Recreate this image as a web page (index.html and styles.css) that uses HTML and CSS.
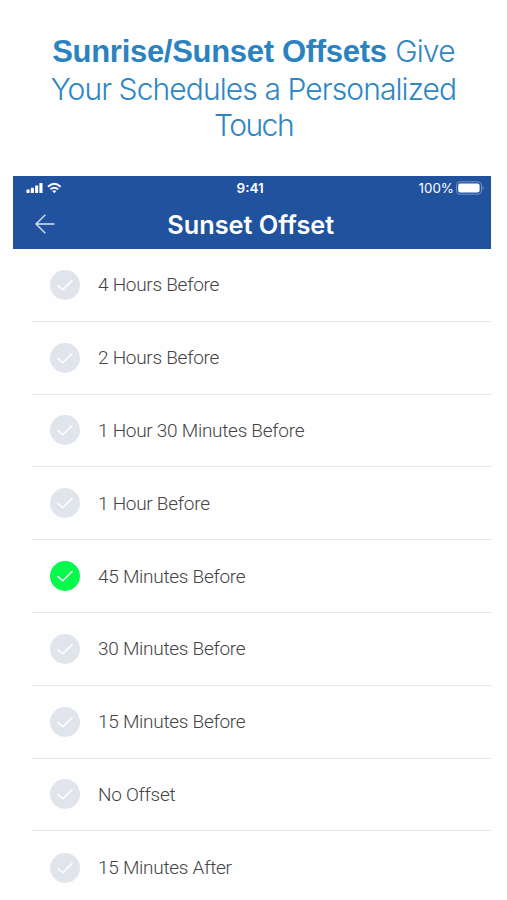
FILE: index.html
```html
<!DOCTYPE html>
<html lang="en">
<head>
    <meta charset="utf-8">
    <title>Sunset Offset</title>
    <link rel="stylesheet" href="styles.css">
</head>
<body>
    <svg class="sprite">
        <symbol id="check" viewBox="0 0 30 30">
            <path d="M8 15.6 L12.8 19.8 L22 10.6" fill="none" stroke="currentColor" stroke-width="1.5" stroke-linecap="round" stroke-linejoin="round"/>
        </symbol>
    </svg>

    <h1 class="headline">
        <span class="line"><b>Sunrise/Sunset Offsets</b> <span class="give">Give</span></span>
        <span class="line line-two">Your Schedules a Personalized</span>
        <span class="line line-three">Touch</span>
    </h1>

    <div class="phone">
        <header class="top">
            <div class="status">
                <div class="signal">
                    <svg width="36" height="12" viewBox="0 0 36 12" fill="#fff">
                        <rect x="0.5" y="7.5" width="3.1" height="3.5" rx="0.6"/>
                        <rect x="4.8" y="5.8" width="3.1" height="5.2" rx="0.6"/>
                        <rect x="9.1" y="3.5" width="3.1" height="7.5" rx="0.6"/>
                        <rect x="13.4" y="1" width="3.1" height="10" rx="0.6"/>
                        <g fill="none" stroke="#fff" stroke-width="1.9">
                            <path d="M22 4.7 Q28.3 -1 34.6 4.7"/>
                            <path d="M24.4 7.4 Q28.3 4 32.2 7.4"/>
                        </g>
                        <path d="M26.2 9 Q28.3 7.3 30.4 9 L28.3 11.2 Z"/>
                    </svg>
                </div>
                <div class="clock">9:41</div>
                <div class="battery">
                    <span class="percent">100%</span>
                    <svg width="29" height="14" viewBox="0 0 29 14">
                        <rect x="0.5" y="0.8" width="25" height="12.4" rx="3.5" fill="none" stroke="#7593c6" stroke-width="1"/>
                        <rect x="2.2" y="2.6" width="21.4" height="8.8" rx="1.8" fill="#fff"/>
                        <path d="M26.7 5 Q29 7 26.7 9 Z" fill="#7593c6"/>
                    </svg>
                </div>
            </div>
            <div class="navbar">
                <svg class="back" width="20" height="20" viewBox="0 0 20 20">
                    <path d="M19.5 10 H1 M10.3 0.8 L1 10 L10.3 19.2" fill="none" stroke="#d5e2f7" stroke-width="1.4"/>
                </svg>
                <h2 class="title">Sunset Offset</h2>
            </div>
        </header>

        <ul class="offsets">
            <li><svg class="tick"><use href="#check"/></svg><span>4 Hours Before</span></li>
            <li><svg class="tick"><use href="#check"/></svg><span>2 Hours Before</span></li>
            <li><svg class="tick"><use href="#check"/></svg><span>1 Hour 30 Minutes Before</span></li>
            <li><svg class="tick"><use href="#check"/></svg><span>1 Hour Before</span></li>
            <li><svg class="tick selected"><use href="#check"/></svg><span>45 Minutes Before</span></li>
            <li><svg class="tick"><use href="#check"/></svg><span>30 Minutes Before</span></li>
            <li><svg class="tick"><use href="#check"/></svg><span>15 Minutes Before</span></li>
            <li><svg class="tick"><use href="#check"/></svg><span>No Offset</span></li>
            <li><svg class="tick"><use href="#check"/></svg><span>15 Minutes After</span></li>
        </ul>
    </div>
</body>
</html>
```
FILE: styles.css
```css
* {
    box-sizing: border-box;
}

body {
    margin: 0;
    height: 900px;
    overflow: hidden;
    background-color: #fefefe;
    font-family: Roboto, "Liberation Sans", sans-serif;
}

.sprite {
    display: none;
}

.headline {
    margin: 0;
    padding-top: 33px;
    height: 176px;
    font-family: Inter, "Liberation Sans", sans-serif;
    font-size: 30px;
    font-weight: 300;
    line-height: 36.5px;
    text-align: center;
    color: #2f86c3;
}

.line {
    display: block;
    white-space: nowrap;
}

.line b {
    font-family: "Liberation Sans", Arial, sans-serif;
    font-weight: bold;
    font-size: 31px;
    letter-spacing: -0.3px;
    color: #2a82c0;
}

.line-two {
    letter-spacing: -0.9px;
}

.line-three {
    letter-spacing: -1.5px;
}

.give {
    letter-spacing: -0.8px;
}

.phone {
    margin-left: 12.5px;
    width: 478.5px;
}

.top {
    height: 73px;
    background-color: #20529e;
    color: #fff;
}

.status {
    display: grid;
    grid-template-columns: 224px auto 1fr;
    align-items: center;
    height: 23px;
    padding: 0 6px 0 0;
    font-family: Inter, "Liberation Sans", sans-serif;
    font-size: 13px;
}

.status svg {
    display: block;
}

.signal {
    padding-left: 13px;
}

.clock {
    font-size: 13.5px;
    font-weight: 600;
}

.battery {
    display: flex;
    justify-content: flex-end;
    align-items: center;
    gap: 2px;
}

.percent {
    font-size: 13.4px;
}

.navbar {
    display: grid;
    grid-template-columns: 20px 1fr 22px;
    align-items: center;
    height: 50px;
    padding: 0 22px;
}

.title {
    margin: 0;
    font-family: Inter, "Liberation Sans", sans-serif;
    font-size: 25.3px;
    font-weight: 600;
    text-align: center;
}

.offsets {
    margin: 0 0 0 19.5px;
    padding: 0;
    list-style: none;
}

.offsets li {
    display: flex;
    align-items: center;
    gap: 18px;
    height: 72.8px;
    padding-left: 18px;
    border-bottom: 1px solid #e4e6e8;
    font-size: 19px;
    font-weight: 300;
    letter-spacing: -0.27px;
    color: #444;
}

.offsets li:last-child {
    border-bottom: none;
}

.tick {
    width: 30px;
    height: 30px;
    border-radius: 50%;
    background-color: #e0e5eb;
    color: #fff;
}

.tick.selected {
    background-color: #04fb4b;
}
```
